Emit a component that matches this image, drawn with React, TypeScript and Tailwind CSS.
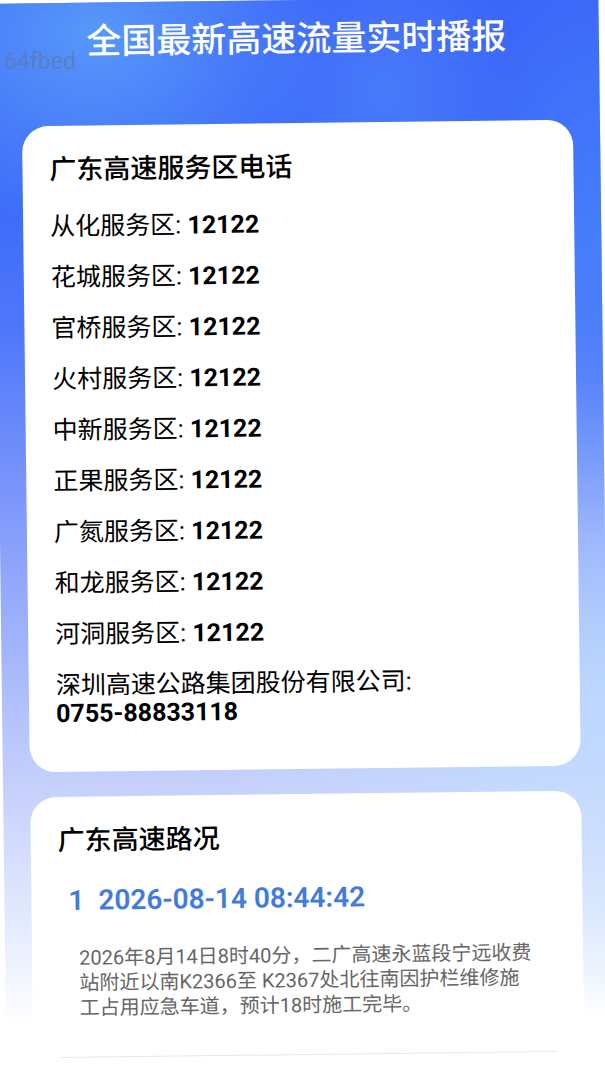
const serviceAreas = [
  { name: '从化服务区', phone: '12122' },
  { name: '花城服务区', phone: '12122' },
  { name: '官桥服务区', phone: '12122' },
  { name: '火村服务区', phone: '12122' },
  { name: '中新服务区', phone: '12122' },
  { name: '正果服务区', phone: '12122' },
  { name: '广氮服务区', phone: '12122' },
  { name: '和龙服务区', phone: '12122' },
  { name: '河洞服务区', phone: '12122' },
  { name: '深圳高速公路集团股份有限公司', phone: '0755-88833118' },
];

const roadReports = [
  {
    id: 1,
    time: '2026-08-14 08:44:42',
    text: '2026年8月14日8时40分，二广高速永蓝段宁远收费站附近以南K2366至 K2367处北往南因护栏维修施工占用应急车道，预计18时施工完毕。',
  },
];

export default function App() {
  return (
    <div className="relative min-h-screen overflow-hidden bg-white font-['Roboto','Noto_Sans_CJK_SC',sans-serif] text-black">
      <main className="min-h-screen -rotate-[0.7deg] bg-[radial-gradient(ellipse_240px_200px_at_100px_30px,#5b9dfae6,transparent),radial-gradient(ellipse_130px_160px_at_390px_90px,#5085fa99,transparent),radial-gradient(ellipse_140px_300px_at_100%_240px,#4a88fb99,transparent),radial-gradient(ellipse_400px_320px_at_100%_700px,#c3e4ffaa,transparent),linear-gradient(to_bottom,#3b66f9_0%,#3d6bf9_18%,#4d77fa_30%,#8099fb_47%,#abbcfb_63%,#c6d1fc_73%,#e2eafe_85%,#ffffff_95%)] px-[27px]">
        <header className="pt-5 pb-[63px] text-center">
          <h1 className="text-[35px] leading-[40px] font-medium text-white">全国最新高速流量实时播报</h1>
        </header>

        <section className="rounded-[26px] bg-white px-[27px] pt-[26px] pb-11">
          <h2 className="text-[27px] leading-9 font-medium">广东高速服务区电话</h2>
          <div className="mt-[25px] flex flex-col gap-[23px] text-[25px] leading-7">
            {serviceAreas.map((area) => (
              <p key={area.name}>
                {area.name}:{' '}
                <strong className="inline-block font-bold">{area.phone}</strong>
              </p>
            ))}
          </div>
        </section>

        <section className="mt-[25px] rounded-t-[26px] bg-white px-[27px] pt-[26px]">
          <h2 className="text-[27px] leading-9 font-medium">广东高速路况</h2>
          {roadReports.map((report) => (
            <article key={report.id} className="border-b border-gray-200 pt-7 pb-9">
              <h3 className="flex gap-3.5 pl-2.5 text-[28px] leading-7 font-semibold text-[#427bdc]">
                <span>{report.id}</span>
                <time>{report.time}</time>
              </h3>
              <p className="mt-[31px] px-5 text-[20px] leading-[25px] text-[#666]">{report.text}</p>
            </article>
          ))}
        </section>
      </main>

      <span className="absolute top-12 left-1 z-10 text-[23px] leading-7 text-[#5b7cb5]/80">64fbed</span>
    </div>
  );
}
